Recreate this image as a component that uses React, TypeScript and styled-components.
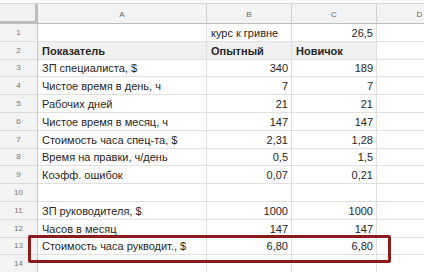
import React from "react";
import styled, { createGlobalStyle } from "styled-components";

const Global = createGlobalStyle`
  html, body { margin: 0; padding: 0; background: #fff; overflow: hidden; }
  body { font-family: "Liberation Sans", Arial, sans-serif; }
`;

const Wrap = styled.div`
  position: relative;
  width: 424px;
  height: 272px;
  overflow: hidden;
  background: #fff;
`;

const TopStrip = styled.div`
  height: 4px;
  background: #fafafa;
  border-bottom: 1px solid #d6d6d6;
  box-sizing: border-box;
`;

const Sheet = styled.div`
  display: grid;
  grid-template-columns: 38px 169px 85px 85px 86px;
  grid-template-rows: 20px;
  grid-auto-rows: 17.8px;
  width: 463px;
`;

const Corner = styled.div`
  background: #f1f1f1;
  border-right: 3px solid #bdbdbd;
  border-bottom: 3px solid #bdbdbd;
  box-sizing: border-box;
`;

const ColHeader = styled.div`
  background: #f3f3f3;
  border-right: 1px solid #d0d0d0;
  border-bottom: 1px solid #bdbdbd;
  box-sizing: border-box;
  display: flex;
  align-items: center;
  justify-content: center;
  font-size: 8px;
  color: #666;
  padding-top: 1px;
`;

const RowHeader = styled.div`
  background: #f3f3f3;
  border-right: 1px solid #c6c6c6;
  border-bottom: 1px solid #dcdcdc;
  box-sizing: border-box;
  display: flex;
  align-items: center;
  justify-content: center;
  font-size: 8px;
  color: #777;
`;

const Cell = styled.div<{ $align?: "left" | "right"; $bold?: boolean; $shade?: boolean }>`
  background: ${(p) => (p.$shade ? "#f0f0f0" : "#fff")};
  border-right: 1px solid #e0e0e0;
  border-bottom: 1px solid #e0e0e0;
  box-sizing: border-box;
  display: flex;
  align-items: center;
  justify-content: ${(p) => (p.$align === "right" ? "flex-end" : "flex-start")};
  padding: 1px 3px 0 4px;
  font-size: 11px;
  font-weight: ${(p) => (p.$bold ? 700 : 400)};
  color: #262626;
  white-space: nowrap;
  overflow: visible;
`;

const Highlight = styled.div`
  position: absolute;
  left: 28px;
  top: 235px;
  width: 363px;
  height: 28px;
  border: 3.5px solid #8c1b1b;
  border-radius: 2px;
  box-sizing: border-box;
  pointer-events: none;
`;

type Row = { a?: string; b?: string; c?: string; bLeft?: boolean; header?: boolean };

const rows: Row[] = [
  { b: "курс к гривне", bLeft: true, c: "26,5" },
  { a: "Показатель", b: "Опытный", c: "Новичок", header: true },
  { a: "ЗП специалиста, $", b: "340", c: "189" },
  { a: "Чистое время в день, ч", b: "7", c: "7" },
  { a: "Рабочих дней", b: "21", c: "21" },
  { a: "Чистое время в месяц, ч", b: "147", c: "147" },
  { a: "Стоимость часа спец-та, $", b: "2,31", c: "1,28" },
  { a: "Время на правки, ч/день", b: "0,5", c: "1,5" },
  { a: "Коэфф. ошибок", b: "0,07", c: "0,21" },
  {},
  { a: "ЗП руководителя, $", b: "1000", c: "1000" },
  { a: "Часов в месяц", b: "147", c: "147" },
  { a: "Стоимость часа рукводит., $", b: "6,80", c: "6,80" },
  {},
];

export default function App() {
  return (
    <Wrap>
      <Global />
      <TopStrip />
      <Sheet>
        <Corner />
        <ColHeader>A</ColHeader>
        <ColHeader>B</ColHeader>
        <ColHeader>C</ColHeader>
        <ColHeader>D</ColHeader>
        {rows.map((r, i) => (
          <React.Fragment key={i}>
            <RowHeader>{i + 1}</RowHeader>
            <Cell $bold={r.header} $shade={r.header}>{r.a}</Cell>
            <Cell $align={r.header || r.bLeft ? "left" : "right"} $bold={r.header} $shade={r.header}>
              {r.b}
            </Cell>
            <Cell $align={r.header ? "left" : "right"} $bold={r.header} $shade={r.header}>
              {r.c}
            </Cell>
            <Cell />
          </React.Fragment>
        ))}
      </Sheet>
      <Highlight />
    </Wrap>
  );
}
